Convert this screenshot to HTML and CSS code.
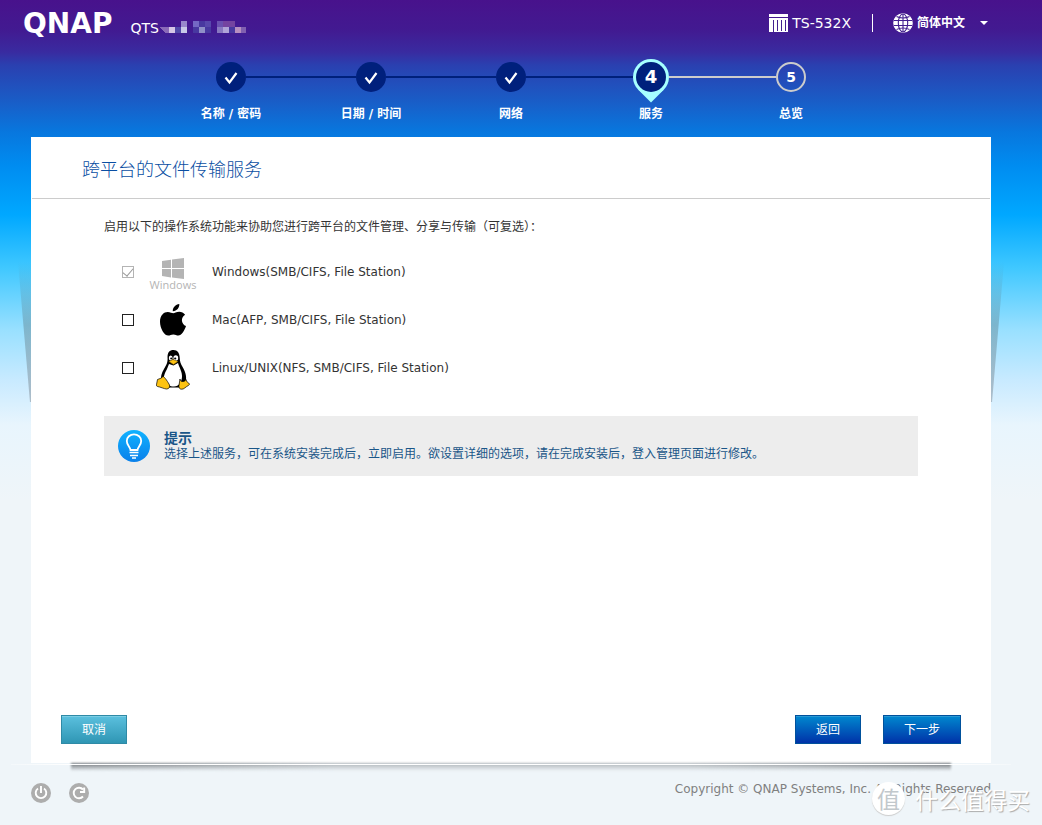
FILE: index.html
```html
<!DOCTYPE html>
<html lang="zh-CN">
<head>
<meta charset="utf-8">
<title>QTS</title>
<link rel="stylesheet" href="styles.css">
</head>
<body>
<div class="page">
  <header class="topbar">
    <div class="brand">
      <span class="logo">QNAP</span>
      <span class="product">QTS</span>
      <svg class="version" width="86" height="12" viewBox="0 0 86 12" shape-rendering="crispEdges" aria-hidden="true">
        <path fill="#8a6ab8" d="M0 6h9v6H5z"/>
        <path fill="#d5c5e5" d="M9 6h6v6H9z"/>
        <path fill="#5048a8" d="M15 6h6v6h-6z"/>
        <path fill="#9888cc" d="M21 0h6v6h-6z"/>
        <path fill="#c8c8e8" d="M21 6h6v6h-6z"/>
        <path fill="#7468c4" d="M33 0h6v6h-6z"/>
        <path fill="#4838a0" d="M33 6h6v6h-6zM39 0h6v6h-6zM45 6h6v6h-6zM69 6h6v6h-6z"/>
        <path fill="#9090c8" d="M39 6h6v6h-6z"/>
        <path fill="#5848ac" d="M45 0h6v6h-6z"/>
        <path fill="#6a50b0" d="M57 0h6v6h-6z"/>
        <path fill="#8878c0" d="M57 6h6v6h-6z"/>
        <path fill="#7444a0" d="M63 0h12v6H63z"/>
        <path fill="#b0a4d8" d="M63 6h6v6h-6z"/>
        <path fill="#b890c0" d="M75 6h6v6h-6z"/>
        <path fill="#8060b0" d="M81 6h5v6h-5z"/>
      </svg>
    </div>
    <div class="tools">
      <svg width="19" height="18" viewBox="0 0 19 18" aria-hidden="true">
        <path fill="#fff" d="M0 0h19v3H0zM0 4h19v14H0z"/>
        <path fill="none" stroke="#43208f" stroke-width="1" d="M4.500 6v12M8.500 6v11M12.500 6v11M16.500 6v11"/>
      </svg>
      <span class="model">TS-532X</span>
      <label class="language">
        <svg width="20" height="20" viewBox="0 0 20 20" aria-hidden="true">
          <circle cx="10" cy="10" r="9.800" fill="#fff"/>
          <g fill="none" stroke="#43208f" stroke-width="1.100">
            <path d="M10 1v18M1 7.500h18M1 12.500h18"/>
            <ellipse cx="10" cy="10" rx="4.700" ry="9"/>
            <path d="M3.500 3.500q6.500 3 13 0M3.500 16.500q6.500-3 13 0"/>
          </g>
        </svg>
        <select class="language-select" aria-label="语言"><option>简体中文</option></select>
        <svg width="8" height="5" viewBox="0 0 8 5" aria-hidden="true"><path fill="#fff" d="M0 0h8L4 4z"/></svg>
      </label>
    </div>
  </header>

  <ol class="steps">
    <li class="step done">
      <div class="marker"><svg width="30" height="30" viewBox="0 0 30 30"><circle cx="15" cy="15" r="15" fill="#00207c"/><path d="M9.500 15.500l4 5L20.500 11" fill="none" stroke="#fff" stroke-width="2.200"/></svg></div>
      <span class="step-name">名称 / 密码</span>
    </li>
    <li class="step done">
      <div class="marker"><svg width="30" height="30" viewBox="0 0 30 30"><circle cx="15" cy="15" r="15" fill="#00207c"/><path d="M9.500 15.500l4 5L20.500 11" fill="none" stroke="#fff" stroke-width="2.200"/></svg></div>
      <span class="step-name">日期 / 时间</span>
    </li>
    <li class="step done">
      <div class="marker"><svg width="30" height="30" viewBox="0 0 30 30"><circle cx="15" cy="15" r="15" fill="#00207c"/><path d="M9.500 15.500l4 5L20.500 11" fill="none" stroke="#fff" stroke-width="2.200"/></svg></div>
      <span class="step-name">网络</span>
    </li>
    <li class="step current" aria-current="step">
      <div class="marker"><svg class="pin" width="36" height="36" viewBox="0 0 36 36"><path fill="#a6ffff" d="M5 30.500L18 43.500 31 30.500z"/><circle cx="18" cy="18" r="18" fill="#a6ffff"/><circle cx="18" cy="18" r="15" fill="#00207c"/><text class="num num-current" x="18" y="24">4</text></svg></div>
      <span class="step-name">服务</span>
    </li>
    <li class="step todo">
      <div class="marker"><svg width="30" height="30" viewBox="0 0 30 30"><circle cx="15" cy="15" r="14" fill="none" stroke="#ccc" stroke-width="2"/><text class="num" x="15" y="20">5</text></svg></div>
      <span class="step-name">总览</span>
    </li>
  </ol>

  <main class="panel">
    <h1 class="panel-title">跨平台的文件传输服务</h1>
    <form class="panel-form">
      <div class="content">
        <p class="intro">启用以下的操作系统功能来协助您进行跨平台的文件管理、分享与传输（可复选）：</p>
        <ul class="services">
          <li class="service">
            <input class="check" type="checkbox" id="svc-win" checked disabled>
            <label class="service-label" for="svc-win">
              <span class="os os-windows">
                <svg width="22" height="21" viewBox="0 0 22 21" aria-hidden="true"><path fill="#b4b4b4" d="M0 3l9-1.300V10H0zM10 1.500L22 0v10H10zM0 11h9v8.400L0 18zM10 11h12v10l-12-1.500z"/></svg>
                <span class="os-name">Windows</span>
              </span>
              <span>Windows(SMB/CIFS, File Station)</span>
            </label>
          </li>
          <li class="service">
            <input class="check" type="checkbox" id="svc-mac">
            <label class="service-label" for="svc-mac">
              <span class="os">
                <svg width="26" height="32" viewBox="0 0 26 32" aria-hidden="true"><path d="M19.300 0c.4 3.600-2.600 7.300-6.500 7.200C12.400 3.700 15.700.3 19.300 0zM13.300 9.200c1.200 0 3-1.500 6-1.500 2.200 0 4.400 1.200 5.800 3-4.700 2.700-4 9.400.9 11.300-1.400 4.400-4.500 9.600-7.700 9.600-1.900 0-2.600-1.200-5-1.200-2.300 0-3.200 1.200-5 1.200C4.300 31.600 0 24.200 0 17.700c0-6.600 4-9.800 7.700-9.800 2.500 0 4.300 1.300 5.600 1.300z"/></svg>
              </span>
              <span>Mac(AFP, SMB/CIFS, File Station)</span>
            </label>
          </li>
          <li class="service">
            <input class="check" type="checkbox" id="svc-linux">
            <label class="service-label" for="svc-linux">
              <span class="os os-linux">
                <svg width="34" height="40" viewBox="0 0 34 40" aria-hidden="true">
                  <path d="M11.500 7C11.500 2.500 13.500 0 17.500 0S23.500 3 23.700 7.500c.1 4 1 6.500 3.200 10 3 5 4.300 11 2.300 15.500L24 37.500H11L5 31c-.5-4 .5-8 3-12 2.500-4.500 4-6.500 3.500-12z"/>
                  <path fill="#fff" d="M13 14l4.500 1.500L22 13c1 4 4.500 9 4 14-.3 5-3 9.500-8 9.500-4.500 0-7-2-9.500-5.500-2-4 1-9 2.500-12z"/>
                  <ellipse cx="14.700" cy="8" rx="1.900" ry="2.500" fill="#fff"/><ellipse cx="19.800" cy="8" rx="2.400" ry="2.700" fill="#fff"/>
                  <circle cx="15.200" cy="8.500" r="1"/><circle cx="19.200" cy="8.500" r="1.100"/>
                  <path fill="#fdc312" stroke="#7a5a00" stroke-width=".5" d="M13 11.500l4-2 5 2-4.500 3z"/>
                  <path fill="#fdc312" stroke="#000" stroke-width=".7" d="M1.500 29.500l3.500-1.300 2-1.700c1.500 0 5.500 6.500 6.500 8.500.7 2-.5 4-3 4-2.500-.2-6-2-9-2.500-1.500-.3-1-2-.7-3.500zM24 29c0 2 1.500 2.500 3 2.500s2.500-1 3-2c.8 2.500 1.500 3 3.200 4 .8.7 0 1.500-1.200 2.200-2.500 1.300-4 3.500-6.200 3.500-2.300 0-3.300-1.500-2.800-4z"/>
                </svg>
              </span>
              <span>Linux/UNIX(NFS, SMB/CIFS, File Station)</span>
            </label>
          </li>
        </ul>
        <aside class="tip">
          <svg width="32" height="32" viewBox="0 0 32 32" aria-hidden="true">
            <defs><linearGradient id="tipfill" x1="0" y1="0" x2="0" y2="1"><stop offset="0" stop-color="#10b2ff"/><stop offset="1" stop-color="#0a80ea"/></linearGradient></defs>
            <circle cx="16" cy="16" r="16" fill="url(#tipfill)"/>
            <path d="M12.500 20c-.3-3-3.700-4.500-3.700-9a7.200 6.700 0 0 1 14.400 0c0 4.500-3.400 6-3.700 9z" fill="none" stroke="#fff" stroke-width="1.800"/>
            <path d="M11.500 22.500h9M12 25.500h8M14 28h4" stroke="#fff" stroke-width="1.700"/>
          </svg>
          <div class="tip-body">
            <strong class="tip-title">提示</strong>
            <p class="tip-text">选择上述服务，可在系统安装完成后，立即启用。欲设置详细的选项，请在完成安装后，登入管理页面进行修改。</p>
          </div>
        </aside>
      </div>
      <div class="actions">
        <button class="btn btn-cancel" type="button">取消</button>
        <button class="btn" type="button">返回</button>
        <button class="btn" type="submit">下一步</button>
      </div>
    </form>
  </main>

  <footer class="footer">
    <div class="power">
      <button class="round" type="button" aria-label="关机"><svg width="20" height="20" viewBox="0 0 20 20"><circle cx="10" cy="10" r="10" fill="#adadad"/><path d="M7 5.500a5.300 5.300 0 1 0 6 0M10 3v7" fill="none" stroke="#fff" stroke-width="1.900"/></svg></button>
      <button class="round" type="button" aria-label="重新启动"><svg width="20" height="20" viewBox="0 0 20 20"><circle cx="10" cy="10" r="10" fill="#adadad"/><path d="M14 13.500a5.300 5.300 0 1 1 0-7M15.200 4.500V9H11" fill="none" stroke="#fff" stroke-width="1.900"/></svg></button>
    </div>
    <p class="copyright">Copyright © QNAP Systems, Inc. All Rights Reserved</p>
  </footer>
</div>
<div class="watermark"><span class="watermark-badge">值</span><span>什么值得买</span></div>
</body>
</html>
```
FILE: styles.css
```css
* { box-sizing: border-box; }

body {
  margin: 0;
  background: #eff5f9 linear-gradient(to bottom,
    #48128c 0, #421a91 30px, #392ba0 52px, #2a40b0 65px, #1a5cc6 100px,
    #0877de 132px, #008cf0 165px, #00a8ff 215px, #40c8ff 268px,
    #99e0ff 330px, #c8eaff 380px, #e8f5fd 425px, #eff5f9 500px) no-repeat;
  background-size: 100% 500px;
  color: #333;
  font: 12px/18px "DejaVu Sans", "Noto Sans CJK SC", sans-serif;
}

h1, p, ul, ol { margin: 0; padding: 0; font-weight: normal; }
ul, ol { list-style: none; }
svg { display: block; flex: none; }

.page {
  display: flex;
  flex-direction: column;
  min-height: 100vh;
  padding: 0 51px 0 31px;
}

.topbar {
  display: flex;
  justify-content: space-between;
  align-items: flex-start;
  height: 59px;
  margin: 0 3px 0 -8px;
  color: #fff;
}

.brand { display: flex; align-items: baseline; padding-top: 8px; }
.logo { font-size: 28px; line-height: 32px; font-weight: bold; margin-right: 18px; }
.product { font-size: 14px; }
.version { margin-left: 1px; }

.tools { display: flex; align-items: center; padding-top: 12px; }
.model { font-size: 14px; line-height: 22px; margin-left: 4px; padding-right: 21px; }
.language { display: flex; align-items: center; border-left: 1px solid #fff; height: 18px; padding-left: 20px; }
.language-select {
  appearance: none;
  border: 0;
  margin: 0 14px 0 4px;
  padding: 0;
  background: none;
  color: #fff;
  font: bold 12px/18px "DejaVu Sans", "Noto Sans CJK SC", sans-serif;
}
.language-select option { color: #333; }

.steps {
  display: grid;
  grid-template-columns: repeat(5, 140px);
  justify-content: center;
  height: 78px;
}
.step { text-align: center; color: #fff; font-weight: bold; }
.marker { display: flex; align-items: center; height: 36px; margin-bottom: 10px; }
.marker::before, .marker::after { content: ""; flex: 1; height: 2px; background: #00207c; }
.step:first-child .marker::before, .step:last-child .marker::after { background: none; }
.current .marker::after, .todo .marker::before { background: #ccc; }
.pin { overflow: visible; }
.num { fill: #fff; font-size: 14px; font-weight: bold; text-anchor: middle; }
.num-current { font-size: 18px; }

.panel {
  position: relative;
  flex: 1;
  display: flex;
  flex-direction: column;
  background: #fff;
}
.panel::before, .panel::after {
  content: "";
  position: absolute;
  top: 125px;
  width: 13px;
  height: 140px;
  background: linear-gradient(to bottom, rgba(90, 120, 130, 0), rgba(90, 120, 130, .4) 45%, rgba(130, 140, 150, .5));
}
.panel::before { right: 100%; clip-path: polygon(0 0, 100% 0, 100% 100%, 92% 100%); }
.panel::after { left: 100%; clip-path: polygon(0 0, 100% 0, 8% 100%, 0 100%); }

.panel-title {
  margin: 0 1px;
  padding: 21px 50px 16px;
  border-bottom: 1px solid #ccc;
  color: #0a4ea2;
  font-size: 18px;
  line-height: 24px;
  font-weight: 300;
}
.panel-form { flex: 1; display: flex; flex-direction: column; }
.content { flex: 1; padding: 19px 73px 24px; }
.services { margin: 12px 0 24px; padding-left: 18px; }
.service { display: flex; align-items: center; gap: 16px; height: 48px; }
.service-label { display: flex; align-items: center; gap: 16px; }
.os { display: flex; flex-direction: column; align-items: center; width: 46px; }
.os-name { color: #b4b4b4; font: 11px/12px "Open Sans", sans-serif; }
.os-windows, .os-linux { padding-top: 4px; }

.check {
  appearance: none;
  display: grid;
  place-items: center;
  width: 12px;
  height: 12px;
  margin: 0;
  border: 1px solid #222;
  background: #fff;
}
.check:disabled { border-color: #b4b4b4; }
.check:checked::before {
  content: "";
  width: 9px;
  height: 5px;
  margin-bottom: 2px;
  border: solid #999;
  border-width: 0 0 1px 1px;
  transform: rotate(-50deg);
}

.tip {
  display: flex;
  align-items: center;
  gap: 14px;
  min-height: 60px;
  padding: 0 14px;
  background: #ededed;
  color: #1a5688;
  line-height: 16px;
}
.tip-title { display: block; font-size: 14px; }

.actions { display: flex; gap: 22px; padding: 0 30px 19px; }
.btn {
  min-width: 66px;
  height: 29px;
  padding: 0 20px;
  border: 1px solid #00519c;
  background: linear-gradient(to bottom, #0088cf, #0032a8);
  box-shadow: inset 0 1px 0 #2a99d4;
  color: #fff;
  font: 12px/18px "DejaVu Sans", "Noto Sans CJK SC", sans-serif;
}
.btn-cancel {
  margin-right: auto;
  border-color: #2f8aa6;
  background: linear-gradient(to bottom, #5bc0de, #2f96b4);
  box-shadow: inset 0 1px 0 #7bcde4;
}

.footer {
  position: relative;
  display: flex;
  justify-content: space-between;
  align-items: flex-start;
  min-height: 62px;
  padding-top: 20px;
}
.footer::before {
  content: "";
  position: absolute;
  z-index: 1;
  top: 1px;
  left: -20px;
  right: -20px;
  height: 1px;
  background: linear-gradient(to right, rgba(255, 255, 255, .3), #fff 6%, #fff 94%, rgba(255, 255, 255, .3));
}
.footer::after {
  content: "";
  position: absolute;
  top: 0;
  left: 40px;
  right: 40px;
  height: 8px;
  background:
    linear-gradient(to right, transparent, rgba(239, 245, 249, .5) 30%, rgba(239, 245, 249, .5) 70%, transparent),
    linear-gradient(to bottom, rgba(60, 64, 68, .75), rgba(70, 75, 80, 0));
  filter: blur(1px);
}
.power { display: flex; gap: 18px; }
.round { width: 20px; height: 20px; padding: 0; border: 0; background: none; }
.copyright { color: #808080; line-height: 12px; }

.watermark {
  position: absolute;
  right: 12px;
  bottom: 10px;
  display: flex;
  align-items: center;
  gap: 10px;
  color: #fff;
  font: 23px/32px "Noto Sans CJK SC", sans-serif;
  text-shadow: 1px 1px 1px #aaa;
  pointer-events: none;
}
.watermark-badge {
  width: 33px;
  height: 33px;
  border-radius: 50%;
  background: #fff;
  box-shadow: 0 1px 1px #ccc;
  color: #c2c8cc;
  text-align: center;
  text-shadow: none;
}
```
